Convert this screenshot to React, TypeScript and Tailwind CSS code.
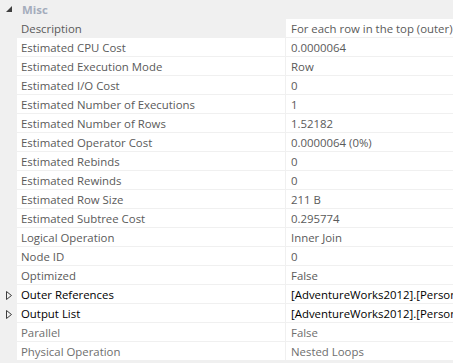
import { Fragment } from 'react';

type Row = { label: string; value: string; expandable?: boolean; tone?: 'dark' | 'light'; shaded?: boolean };

const rows: Row[] = [
  { label: 'Description', value: 'For each row in the top (outer)', shaded: true },
  { label: 'Estimated CPU Cost', value: '0.0000064' },
  { label: 'Estimated Execution Mode', value: 'Row' },
  { label: 'Estimated I/O Cost', value: '0' },
  { label: 'Estimated Number of Executions', value: '1' },
  { label: 'Estimated Number of Rows', value: '1.52182' },
  { label: 'Estimated Operator Cost', value: '0.0000064 (0%)' },
  { label: 'Estimated Rebinds', value: '0' },
  { label: 'Estimated Rewinds', value: '0' },
  { label: 'Estimated Row Size', value: '211 B' },
  { label: 'Estimated Subtree Cost', value: '0.295774' },
  { label: 'Logical Operation', value: 'Inner Join' },
  { label: 'Node ID', value: '0' },
  { label: 'Optimized', value: 'False' },
  { label: 'Outer References', value: '[AdventureWorks2012].[Person', expandable: true, tone: 'dark' },
  { label: 'Output List', value: '[AdventureWorks2012].[Person', expandable: true, tone: 'dark' },
  { label: 'Parallel', value: 'False', tone: 'light' },
  { label: 'Physical Operation', value: 'Nested Loops', tone: 'light' },
];

function toneClass(tone?: Row['tone']) {
  if (tone === 'dark') return 'text-black';
  if (tone === 'light') return 'text-[#6e6e6e]';
  return 'text-[#5a5a5a]';
}

export default function App() {
  return (
    <div
      className="w-[453px] h-[363px] overflow-hidden bg-[#f0f0f0] text-[11.4px] leading-[19px]"
      style={{ fontFamily: '"Segoe UI", "Open Sans", "Noto Sans", sans-serif' }}
    >
      {/* Category header */}
      <div className="flex h-[19px] items-center">
        <div className="w-[17px] flex justify-center pl-[1px]">
          <svg width="7" height="7" viewBox="0 0 7 7">
            <path d="M6 0 L6 6 L0 6 Z" fill="#404040" />
          </svg>
        </div>
        <span className="pl-[5px] font-bold text-[#a4acbc]">Misc</span>
      </div>

      {/* Property grid */}
      <div className="grid grid-cols-[17px_268px_1px_1fr] auto-rows-[19px]">
        {rows.map((r) => (
          <Fragment key={r.label}>
            <div className="flex items-center justify-center pt-[1px]">
              {r.expandable && (
                <svg width="6" height="9" viewBox="0 0 6 9">
                  <path d="M0.5 0.5 L5.5 4.5 L0.5 8.5 Z" fill="none" stroke="#3c3c3c" strokeWidth="1" />
                </svg>
              )}
            </div>
            <div
              className={`h-[18px] pl-[4px] whitespace-nowrap overflow-hidden ${r.shaded ? 'bg-[#f0f0f0]' : 'bg-white'} ${toneClass(r.tone)}`}
            >
              {r.label}
            </div>
            <div className="h-[18px] bg-[#f0f0f0]" />
            <div className={`h-[18px] pl-[5px] bg-white whitespace-nowrap overflow-hidden ${toneClass(r.tone)}`}>
              {r.value}
            </div>
          </Fragment>
        ))}
      </div>
    </div>
  );
}
